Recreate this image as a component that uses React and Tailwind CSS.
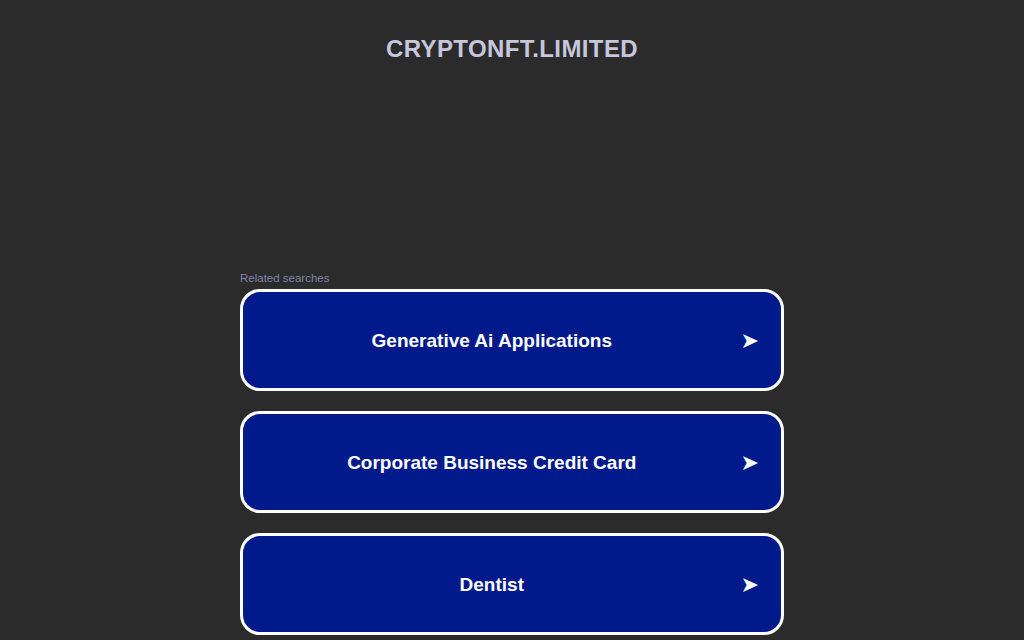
import React from "react";

const searches = [
  "Generative Ai Applications",
  "Corporate Business Credit Card",
  "Dentist",
];

const SearchLink = ({ label }) => (
  <a
    href="#"
    className="flex items-center h-[102px] rounded-[20px] border-[3px] border-white bg-[#011a8b] text-white no-underline"
  >
    <span className="flex-1 pt-[2px] text-center text-[19px] font-bold leading-[24px]">
      {label}
    </span>
    <span className="pr-[22px] pt-[2px] text-[22px] leading-[24px] font-['DejaVu_Sans',sans-serif]">
      ➤
    </span>
  </a>
);

export default function App() {
  return (
    <div className="min-h-[640px] bg-[#2b2b2b] font-['Liberation_Sans',Arial,sans-serif]">
      <div className="pt-[35px] text-center">
        <h1 className="text-[24px] leading-[28px] font-bold tracking-[0.4px] text-[#c6c6dc]">
          CRYPTONFT.LIMITED
        </h1>
      </div>
      <div className="mx-auto w-[544px] pt-[208px]">
        <p className="text-[11.5px] leading-[14px] text-[#8182a6] mb-[4px]">
          Related searches
        </p>
        <div className="flex flex-col gap-[20px]">
          {searches.map((s) => (
            <SearchLink key={s} label={s} />
          ))}
        </div>
      </div>
    </div>
  );
}
